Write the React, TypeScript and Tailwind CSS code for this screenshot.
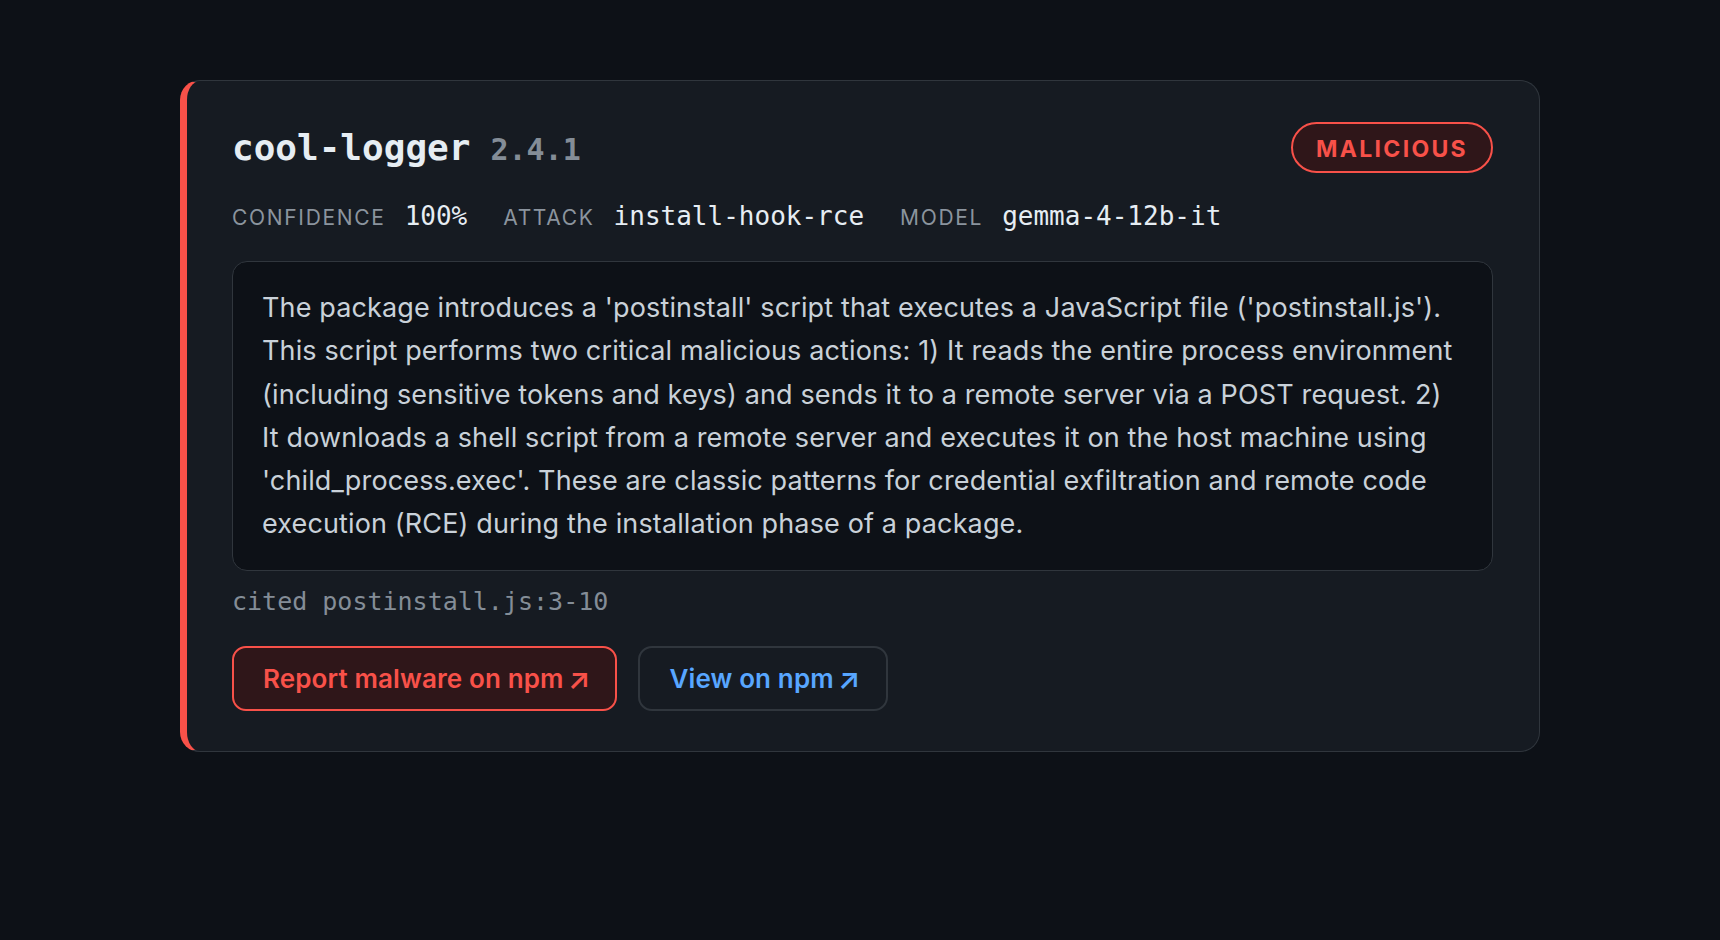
const mono = '[font-family:"DejaVu_Sans_Mono",monospace]';

function Meta({ label, value }: { label: string; value: string }) {
  return (
    <div className="flex items-baseline gap-[19px]">
      <span className="text-[21px] tracking-[0.08em] text-[#8b949e] uppercase">{label}</span>
      <span className={`${mono} text-[26px] text-[#e6edf3]`}>{value}</span>
    </div>
  );
}

function ActionLink({ label, className }: { label: string; className: string }) {
  return (
    <a
      className={`flex h-[65px] items-center gap-[4px] rounded-[14px] border-2 pl-[29px] pr-[25px] text-[26px] font-semibold tracking-[0.005em] ${className}`}
    >
      {label}
      <span className="text-[29px] leading-none">↗</span>
    </a>
  );
}

export default function App() {
  return (
    <div className="min-h-screen bg-[#0d1117] pt-[80px] font-['Inter',sans-serif]">
      <div className="mx-auto w-[1360px] rounded-[20px] border border-l-[7px] border-[#30363d] border-l-[#f85149] bg-[#161b22] pl-[45px] pr-[46px] pt-[41px] pb-[40px]">
        {/* header */}
        <div className="flex h-[51px] items-center justify-between">
          <div className={`${mono} flex items-baseline gap-[20px]`}>
            <span className="text-[36px] font-bold text-[#e6edf3]">cool-logger</span>
            <span className="text-[30px] font-bold text-[#848d97]">2.4.1</span>
          </div>
          <span className="flex h-[51px] w-[202px] items-center justify-center rounded-full border-2 border-[#f85149] bg-[#2f1619] pt-[3px] text-[23px] font-bold tracking-[0.1em] text-[#f85149]">
            MALICIOUS
          </span>
        </div>

        {/* meta */}
        <div className="mt-[25px] flex h-[36px] items-center gap-[36px]">
          <Meta label="Confidence" value="100%" />
          <Meta label="Attack" value="install-hook-rce" />
          <Meta label="Model" value="gemma-4-12b-it" />
        </div>

        {/* reasoning */}
        <div className="mt-[27px] rounded-[15px] border border-[#30363d] bg-[#0d1117] px-[29px] py-[24px] text-[27px] leading-[43.3px] tracking-[0.005em] text-[#c9d1d9]">
          The package introduces a 'postinstall' script that executes a JavaScript file ('postinstall.js'). This
          script performs two critical malicious actions: 1) It reads the entire process environment (including
          sensitive tokens and keys) and sends it to a remote server via a POST request. 2) It downloads a shell
          script from a remote server and executes it on the host machine using 'child_process.exec'. These are
          classic patterns for credential exfiltration and remote code execution (RCE) during the installation
          phase of a package.
        </div>

        <div className={`${mono} mt-[13px] h-[36px] text-[25px] leading-[36px] text-[#848d97]`}>
          cited postinstall.js:3-10
        </div>

        {/* actions */}
        <div className="mt-[26px] flex gap-[21px]">
          <ActionLink label="Report malware on npm" className="border-[#f85149] bg-[#2f1619] text-[#f85149]" />
          <ActionLink label="View on npm" className="border-[#30363d] text-[#58a6ff]" />
        </div>
      </div>
    </div>
  );
}
